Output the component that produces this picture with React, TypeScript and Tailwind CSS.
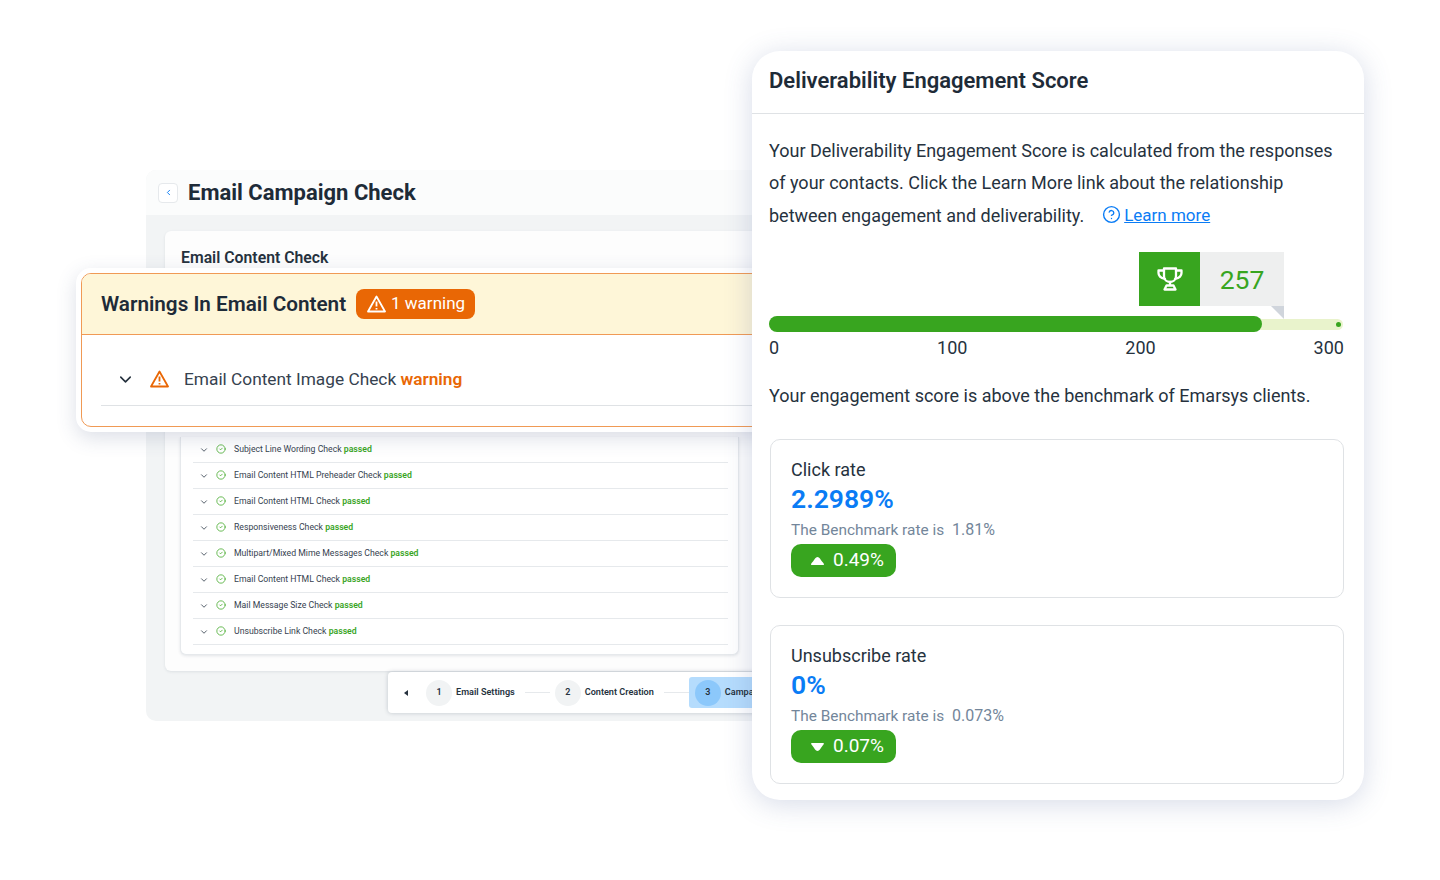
import { ChevronDown, ChevronLeft, CircleCheck, CircleHelp } from 'lucide-react';

const checks = [
  ['Subject Line Wording Check'],
  ['Email Content HTML Preheader Check'],
  ['Email Content HTML Check'],
  ['Responsiveness Check'],
  ['Multipart/Mixed Mime Messages Check'],
  ['Email Content HTML Check'],
  ['Mail Message Size Check'],
  ['Unsubscribe Link Check'],
];

function WarnIcon({ className }: { className?: string }) {
  return (
    <svg width="19" height="18" viewBox="0 0 19 18" fill="none" stroke="currentColor" strokeWidth="1.8" strokeLinejoin="round" className={className}>
      <path d="M9.5 1.5 L18 16.5 H1 Z" />
      <path d="M9.5 6.5 V11.5 M9.5 13 V14.5" />
    </svg>
  );
}

function CheckRow({ name }: { name: string }) {
  return (
    <div className="flex h-[26px] items-center border-b border-[#e6e9ec] pl-[6px] text-[8.7px] text-[#36424f]">
      <ChevronDown size={10} strokeWidth={2} className="text-[#36424f]" />
      <CircleCheck size={10} strokeWidth={1.8} className="ml-[7px] -translate-y-px text-[#3aa51f]" />
      <span className="ml-[8px]">
        {name} <span className="font-semibold text-[#3aa51f]">passed</span>
      </span>
    </div>
  );
}

function Step({ n, label, active }: { n: number; label: string; active?: boolean }) {
  return (
    <div className={`flex h-[31px] shrink-0 items-center ${active ? 'rounded-l-[3px] bg-[#b5dcfd] pl-[6px]' : ''}`}>
      <div
        className={`flex h-[26px] w-[26px] items-center justify-center rounded-full text-[9px] font-semibold ${
          active ? 'bg-[#8cc8fb]' : 'bg-[#f1f3f4]'
        }`}
      >
        {n}
      </div>
      <span className="ml-[4px] text-[9.1px] font-semibold text-[#26323e]">{label}</span>
    </div>
  );
}

function RateCard({ title, value, bench, diff, up }: { title: string; value: string; bench: string; diff: string; up?: boolean }) {
  return (
    <div className="h-[159px] rounded-[10px] border border-[#dfe2e5] px-[20px] pt-[17px]">
      <p className="text-[18px] leading-[26px] text-[#26323e]">{title}</p>
      <p className="text-[26.5px] font-semibold leading-[32px] text-[#0a7cf5]">{value}</p>
      <p className="mt-[4px] text-[15.4px] leading-[22px] text-[#73869a]">
        The Benchmark rate is <span className="ml-[4px] text-[16px]">{bench}</span>
      </p>
      <div className="mt-[3px] flex h-[33px] w-[105px] items-center rounded-[10px] bg-[#38a51f] pl-[20px] text-[19px] text-white">
        <svg width="13" height="8" viewBox="0 0 13 8" className="mr-[9px]">
          <path
            d={
              up
                ? 'M6.5 0 C8.5 0 9.5 2.5 11 4.5 C12.5 6 14 8 12 8 H1 C-1 8 0.5 6 2 4.5 C3.5 2.5 4.5 0 6.5 0 Z'
                : 'M1 0 H12 C14 0 12.5 2 11 3.5 C9.5 5.5 8.5 8 6.5 8 C4.5 8 3.5 5.5 2 3.5 C0.5 2 -1 0 1 0 Z'
            }
            fill="#fff"
          />
        </svg>
        {diff}
      </div>
    </div>
  );
}

export default function App() {
  return (
    <div className="relative h-[880px] w-[1440px] overflow-hidden bg-white font-['Roboto',sans-serif] text-[#26323e]">
      {/* window behind */}
      <div className="absolute left-[146px] top-[170px] h-[551px] w-[640px] rounded-[10px] bg-[#f2f4f5]">
        <div className="flex h-[45px] items-center rounded-t-[10px] bg-[#fbfcfc] pl-[12px]">
          <div className="flex h-[20px] w-[20px] items-center justify-center rounded-[4px] border border-[#e6e9ec] bg-white">
            <ChevronLeft size={9} strokeWidth={2.5} className="text-[#0a7cf5]" />
          </div>
          <h1 className="ml-[10px] text-[22px] font-bold text-[#1e2b38]">Email Campaign Check</h1>
        </div>
        <div className="ml-[19px] mt-[16px] h-[440px] rounded-[6px] bg-[#fdfdfd] pl-[15px] pt-[16px] shadow-[0_1px_3px_rgba(40,60,80,0.1)]">
          <h2 className="pl-px text-[15.8px] font-semibold leading-[22px] text-[#26323e]">Email Content Check</h2>
          <div className="mt-[168px] h-[218px] w-[559px] rounded-b-[6px] border border-t-0 border-[#e6e9ec] bg-white pl-[12px] pr-[10px] shadow-[0_1px_3px_rgba(40,60,80,0.12)]">
            {checks.map(([name], i) => (
              <CheckRow key={i} name={name} />
            ))}
          </div>
        </div>
        <div className="absolute left-[242px] top-[502px] flex h-[41px] w-[400px] items-center overflow-hidden rounded-[4px] bg-white shadow-[0_0_4px_rgba(40,60,80,0.25)]">
          <svg width="4" height="6" viewBox="0 0 4 6" className="ml-[16px] mr-[18px] shrink-0">
            <path d="M4 0 V6 L0 3 Z" fill="#26323e" />
          </svg>
          <Step n={1} label="Email Settings" />
          <div className="ml-[10px] mr-[5px] h-px w-[25px] shrink-0 bg-[#e6e9ec]" />
          <Step n={2} label="Content Creation" />
          <div className="ml-[10px] h-px w-[25px] shrink-0 bg-[#e6e9ec]" />
          <Step n={3} label="Campaign Check" active />
        </div>
      </div>

      {/* warning card */}
      <div className="absolute left-[76px] top-[268px] w-[720px] rounded-[15px] border-[5px] border-white bg-white shadow-[0_6px_20px_rgba(60,80,120,0.18)]">
        <div className="h-[154px] overflow-hidden rounded-[10px] border border-[#f09a55] bg-white">
          <div className="flex h-[61px] items-center border-b border-[#f09a55] bg-[#fef6d8] pl-[19px]">
            <h2 className="translate-y-px text-[20.7px] font-semibold text-[#1e2b38]">Warnings In Email Content</h2>
            <div className="ml-[10px] flex h-[30px] w-[119px] items-center rounded-[8px] bg-[#e96705] pl-[11px] text-[17px] text-white">
              <WarnIcon className="mr-[5px]" />1 warning
            </div>
          </div>
          <div className="mx-[19px] flex h-[71px] items-center border-b border-[#dfe2e5] pl-[15px] pt-[19px] text-[17.3px] text-[#36424f]">
            <ChevronDown size={19} strokeWidth={2} className="text-[#26323e]" />
            <WarnIcon className="ml-[15px] -translate-y-px text-[#e96705]" />
            <span className="ml-[15px]">
              Email Content Image Check <span className="font-semibold text-[#e96705]">warning</span>
            </span>
          </div>
        </div>
      </div>

      {/* score card */}
      <div className="absolute left-[752px] top-[51px] h-[749px] w-[612px] rounded-[28px] bg-white shadow-[0_4px_28px_rgba(70,90,150,0.22)]">
        <div className="flex h-[63px] items-center border-b border-[#dfe2e5] pb-[3px] pl-[17px]">
          <h2 className="text-[22px] font-semibold text-[#1e2b38]">Deliverability Engagement Score</h2>
        </div>
        <div className="px-[17px] pr-[20px]">
          <p className="mt-[20.5px] whitespace-nowrap text-[18px] leading-[32.5px] text-[#26323e]">
            Your Deliverability Engagement Score is calculated from the responses
            <br />
            of your contacts. Click the Learn More link about the relationship
            <br />
            between engagement and deliverability.
            <span className="ml-[18px] inline-flex -translate-y-[2px] items-center align-middle text-[17px] text-[#0a7cf5]">
              <CircleHelp size={19} strokeWidth={1.75} className="mr-[3px]" />
              <span className="underline">Learn more</span>
            </span>
          </p>
          <div className="ml-[370px] mt-[19px] flex h-[54px] w-[145px]">
            <div className="flex w-[61px] items-center justify-center bg-[#38a51f]">
              <svg width="26" height="24" viewBox="0 0 26 24" fill="none" stroke="#fff" strokeWidth="2.3" strokeLinejoin="round" strokeLinecap="round">
                <path d="M7 1.5 H19 V9 C19 13 16 15 13 15 C10 15 7 13 7 9 Z" />
                <path d="M7 3.5 H1.5 V6 C1.5 9 4 11 8 12 M19 3.5 H24.5 V6 C24.5 9 22 11 18 12" />
                <path d="M13 15 V18.5 M9.5 18.5 H16.5 L18.5 22.5 H7.5 Z" />
              </svg>
            </div>
            <div className="relative flex w-[84px] items-center justify-center bg-[#eeefef] text-[26.5px] text-[#38a51f]">
              <span className="translate-y-px">257</span>
              <svg width="13" height="13" viewBox="0 0 13 13" className="absolute right-0 top-full">
                <path d="M0 0 H13 V13 Z" fill="#d0d5dc" />
              </svg>
            </div>
          </div>
          <div className="mt-[10px] flex h-[16px] w-[574px] items-center">
            <div className="relative flex h-[11px] w-full items-center justify-end rounded-full bg-[#e9f3cc]">
              <div className="absolute left-0 top-[-2.5px] h-[16px] w-[493px] rounded-full bg-[#38a51f]" />
              <div className="mr-[2px] h-[5px] w-[5px] rounded-full bg-[#38a51f]" />
            </div>
          </div>
          <div className="mt-[4px] flex w-[575px] justify-between text-[18px] leading-[24px] text-[#26323e]">
            <span>0</span>
            <span>100</span>
            <span>200</span>
            <span>300</span>
          </div>
          <p className="mt-[22px] text-[18px] leading-[28px] text-[#26323e]">
            Your engagement score is above the benchmark of Emarsys clients.
          </p>
          <div className="ml-px mt-[29px] flex w-[574px] flex-col gap-[27px]">
            <RateCard title="Click rate" value="2.2989%" bench="1.81%" diff="0.49%" up />
            <RateCard title="Unsubscribe rate" value="0%" bench="0.073%" diff="0.07%" />
          </div>
        </div>
      </div>
    </div>
  );
}
